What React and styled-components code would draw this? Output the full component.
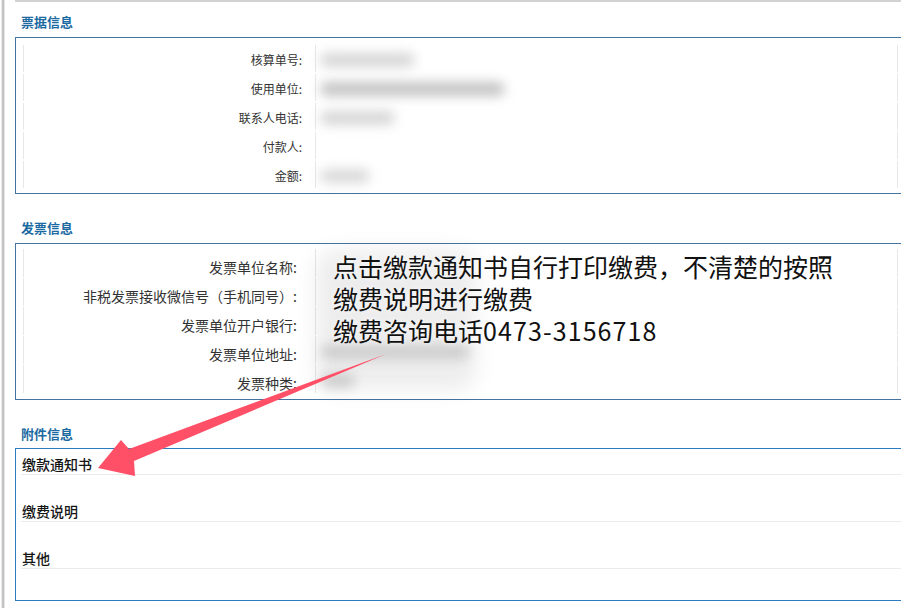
import React from 'react';
import styled, { createGlobalStyle } from 'styled-components';

const GlobalStyle = createGlobalStyle`
  html, body {
    margin: 0;
    padding: 0;
    background: #fff;
    overflow: hidden;
  }
  body {
    font-family: "Noto Sans CJK SC", "Noto Sans", sans-serif;
    color: #333;
  }
`;

const Page = styled.div`
  position: relative;
  display: flex;
  width: 901px;
  height: 608px;
  overflow: hidden;
`;

const Rail = styled.div`
  flex: none;
  width: 2px;
  margin-left: 2px;
  background: #c4c4c4;
  box-shadow: 1px 0 0 #e6e6e6, -1px 0 0 #ececec;
`;

const Main = styled.div`
  flex: none;
  width: 895px;
  margin-left: 11px;
  border-top: 2px solid #d2d2d2;
`;

const SectionTitle = styled.div`
  margin: ${p => p.$top}px 0 ${p => p.$bottom}px;
  padding-left: 6px;
  height: 20px;
  line-height: 20px;
  font-size: 13px;
  font-weight: bold;
  color: #1c6aa2;
`;

const Box = styled.div`
  border: 1px solid ${p => p.$color || '#44739f'};
  padding: ${p => p.$pt}px 0 ${p => p.$pb}px 7px;
  display: flex;
  flex-direction: column;
  gap: 2px;
`;

const Row = styled.div`
  display: grid;
  grid-template-columns: 290px 580px 1fr;
  gap: 2px;
  height: 27px;
`;

const Label = styled.div`
  border-left: 1px solid #e8e8e8;
  display: flex;
  align-items: center;
  justify-content: flex-end;
  padding: ${p => p.$shift}px ${p => p.$right}px 0 0;
  font-size: ${p => p.$size}px;
  color: #333;
  white-space: nowrap;
`;

const Value = styled.div`
  border-left: 1px solid #e8e8e8;
  display: flex;
  align-items: center;
  padding-left: 4px;
`;

const Spare = styled.div`
  border-left: 1px solid #e8e8e8;
`;

const Blur = styled.span`
  display: block;
  width: ${p => p.$w}px;
  height: 14px;
  margin-top: 3px;
  border-radius: 7px;
  background: #b4b4b4;
  opacity: ${p => p.$o};
  filter: blur(6px);
`;

const AttachItem = styled.div`
  height: 47px;
  display: flex;
  flex-direction: column;
  margin-right: -1px;
`;

const AttachHead = styled.div`
  height: 20px;
  line-height: 20px;
  padding-left: 1px;
  font-size: 14px;
  font-weight: 500;
  color: #151515;
  border-bottom: 1px solid #ebebeb;
`;

const AttachBox = styled.div`
  border: 1px solid #2c7bbf;
  padding: 5px 0 5px 5px;
`;

const Note = styled.div`
  position: absolute;
  left: 333px;
  top: 250px;
  font-size: 25px;
  line-height: 32px;
  color: #111;
  white-space: nowrap;
  text-shadow: 0 0 6px rgba(255, 255, 255, 0.8);
`;

const Digits = styled.span`
  letter-spacing: 1.1px;
`;

const Halo = styled.div`
  position: absolute;
  left: 316px;
  top: 250px;
  width: 160px;
  height: 140px;
  border-radius: 20px;
  background: rgba(0, 0, 0, 0.07);
  filter: blur(10px);
  pointer-events: none;
`;

const Arrow = styled.svg`
  position: absolute;
  left: 0;
  top: 0;
  pointer-events: none;
`;

const ticket = [
  ['核算单号:', 95, 0.55],
  ['使用单位:', 185, 0.8],
  ['联系人电话:', 75, 0.55],
  ['付款人:', 0, 0],
  ['金额:', 50, 0.5],
];

const invoice = [
  ['发票单位名称:', 0, 0],
  ['非税发票接收微信号（手机同号）:', 0, 0],
  ['发票单位开户银行:', 0, 0],
  ['发票单位地址:', 150, 0.45],
  ['发票种类:', 35, 0.5],
];

const attachments = ['缴款通知书', '缴费说明', '其他'];

const InfoBox = ({ rows, size, shift, right, pt, pb }) => (
  <Box $pt={pt} $pb={pb}>
    {rows.map(([label, w, o]) => (
      <Row key={label}>
        <Label $size={size} $shift={shift} $right={right}>{label}</Label>
        <Value>{w > 0 && <Blur $w={w} $o={o} />}</Value>
        <Spare />
      </Row>
    ))}
  </Box>
);

export default function App() {
  return (
    <Page>
      <GlobalStyle />
      <Rail />
      <Main>
        <SectionTitle $top={10} $bottom={5}>票据信息</SectionTitle>
        <InfoBox rows={ticket} size={12} shift={1} right={11} pt={7} pb={5} />

        <SectionTitle $top={24} $bottom={5}>发票信息</SectionTitle>
        <InfoBox rows={invoice} size={14} shift={8} right={16} pt={5} pb={7} />

        <SectionTitle $top={24} $bottom={4}>附件信息</SectionTitle>
        <AttachBox>
          {attachments.map(name => (
            <AttachItem key={name}>
              <AttachHead>{name}</AttachHead>
            </AttachItem>
          ))}
        </AttachBox>
      </Main>

      <Halo />
      <Note>
        点击缴款通知书自行打印缴费，不清楚的按照<br />
        缴费说明进行缴费<br />
        缴费咨询电话<Digits>0473-3156718</Digits>
      </Note>

      <Arrow width="901" height="608" viewBox="0 0 901 608">
        <polygon
          points="98,468 121,440 129,449 386,354 134,461 135,476"
          fill="#ff5068"
        />
      </Arrow>
    </Page>
  );
}
